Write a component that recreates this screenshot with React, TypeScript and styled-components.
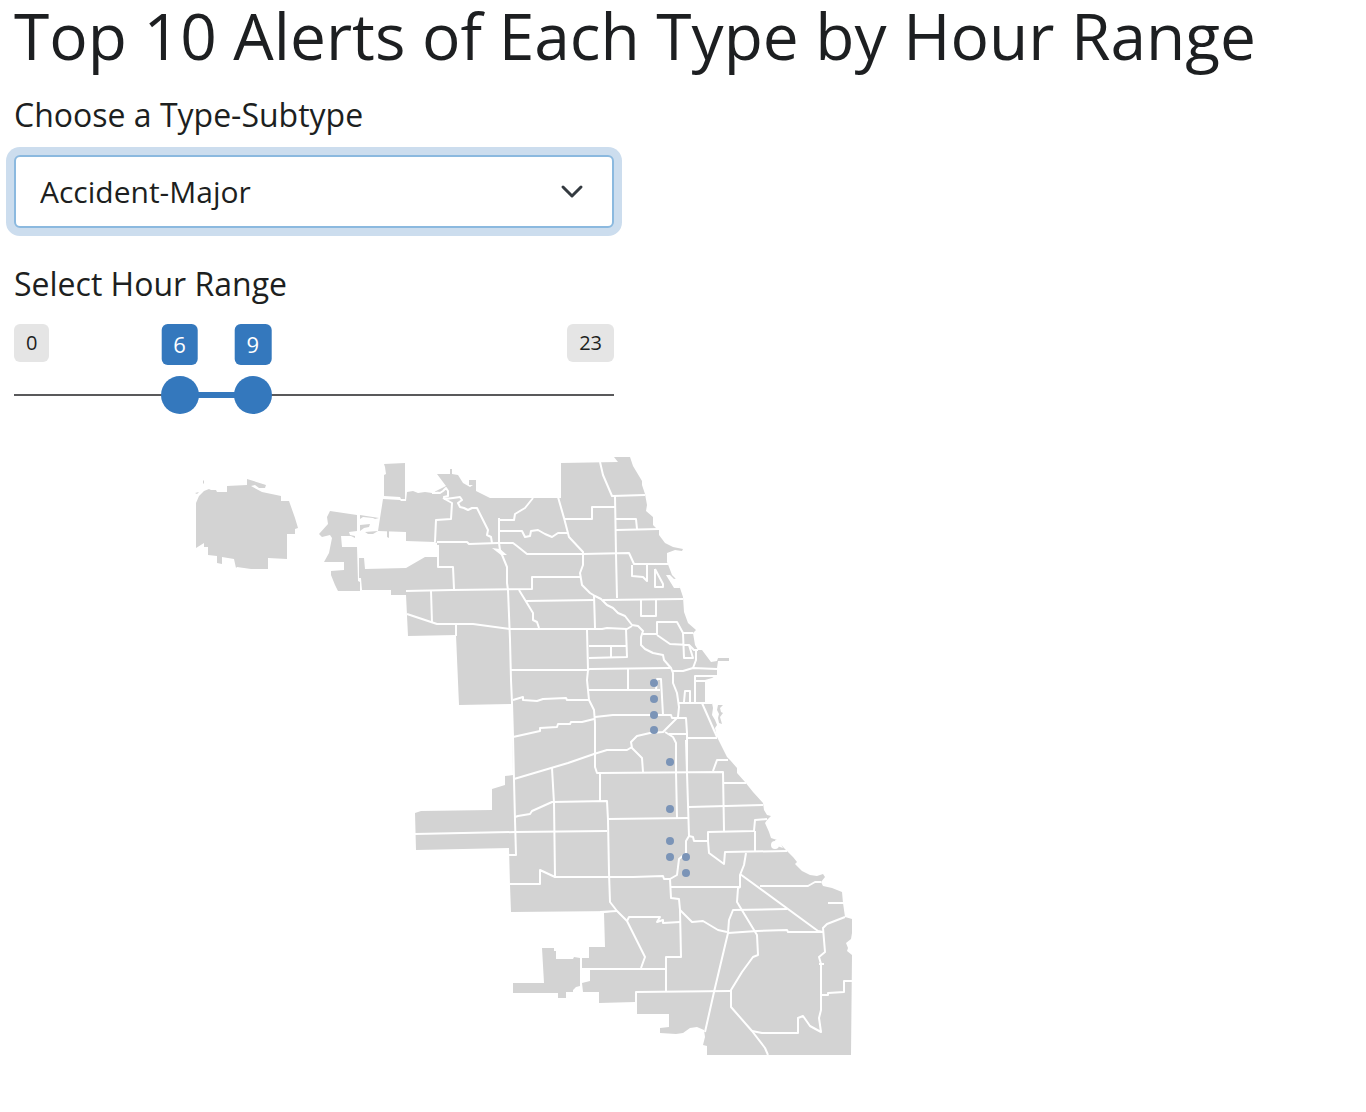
import React, { useState } from "react";
import styled, { createGlobalStyle } from "styled-components";

const GlobalStyle = createGlobalStyle`
  *, *::before, *::after { box-sizing: border-box; }
  body {
    margin: 0;
    background: #ffffff;
    color: #1d1f21;
    font-family: "Open Sans", "Noto Sans", sans-serif;
  }
`;

const Page = styled.main`
  display: flex;
  flex-direction: column;
  padding: 0 14px 32px;
`;

const Title = styled.h1`
  margin: 0 0 19px;
  font-size: 64px;
  font-weight: 400;
  line-height: 72px;
`;

const Controls = styled.div`
  display: flex;
  flex-direction: column;
  gap: 32px;
  width: 100%;
  max-width: 600px;
`;

const Field = styled.div`
  display: flex;
  flex-direction: column;
  gap: 16px;
`;

const FieldSet = styled.fieldset`
  display: flex;
  flex-direction: column;
  min-width: 0;
  margin: 0;
  padding: 0;
  border: 0;
`;

const Label = styled.label`
  font-size: 32px;
  line-height: 48px;
`;

const Legend = styled.legend`
  padding: 0;
  margin-bottom: 16px;
  font-size: 32px;
  line-height: 48px;
`;

const SelectBox = styled.div`
  display: grid;
  align-items: center;

  > * {
    grid-area: 1 / 1;
  }
`;

const Select = styled.select`
  appearance: none;
  width: 100%;
  height: 73px;
  padding: 0 72px 0 24px;
  border: 2px solid #8bb9df;
  border-radius: 6px;
  outline: none;
  background: #ffffff;
  color: inherit;
  font: inherit;
  font-size: 30px;
  box-shadow: 0 0 0 8px #ccddee;
`;

const Chevron = styled.svg`
  justify-self: end;
  margin-right: 26px;
  width: 32px;
  height: 32px;
  pointer-events: none;
`;

const Badges = styled.div`
  position: relative;
  display: flex;
  justify-content: space-between;
  align-items: flex-start;
  height: 52px;
`;

const LimitBadge = styled.span`
  padding: 0 12px;
  border-radius: 6px;
  background: #e5e5e5;
  font-size: 20px;
  line-height: 38px;
`;

const ValueBadge = styled.output`
  position: absolute;
  top: 0;
  transform: translateX(-50%);
  padding: 0 12px;
  border-radius: 6px;
  background: #3478bd;
  color: #ffffff;
  font-size: 22px;
  line-height: 41px;
`;

const Slider = styled.div`
  display: grid;
  align-items: center;
  height: 38px;

  > * {
    grid-area: 1 / 1;
  }
`;

const Rail = styled.div`
  height: 2px;
  background: #59595b;
`;

const RailFill = styled.div`
  height: 6px;
  background: #3478bd;
`;

const Range = styled.input`
  appearance: none;
  width: 100%;
  height: 38px;
  margin: 0;
  background: transparent;
  pointer-events: none;

  &::-webkit-slider-thumb {
    appearance: none;
    width: 38px;
    height: 38px;
    border: 0;
    border-radius: 50%;
    background: #3478bd;
    pointer-events: auto;
  }
`;

const MapFigure = styled.figure`
  max-width: 852px;
  margin: 32px 0 0;
`;

const MapDrawing = styled.svg`
  display: block;
  width: 100%;
  height: auto;
`;

const land = [
  "196,503 199,496 204,491 209,489 211,490 216,490 217,492 227,492 227,486 247,485 247,479 266,485 265,488 259,488 255,485 251,486 262,492 281,496 281,501 289,501 295,518 298,528 295,529 295,534 287,534 287,559 268,558 268,569 251,569 237,567 236,568 234,559 222,557 222,564 217,563 217,556 208,555 208,547 204,547 204,543 196,548",
  "330,511 357,515 357,531 349,532 350,535 355,536 355,538 351,536 341,536 342,547 357,547 358,581 360,582 360,591 338,591 335,585 331,575 331,571 344,570 344,562 324,562 329,553 332,538 330,535 322,537 319,534 328,524 327,517",
  "384,464 405,463 405,499 401,499 400,497 384,496 384,475 386,474 385,467",
  "383,499 400,500 401,501 406,501 407,492 413,491 418,493 425,492 432,493 442,491 434,492 446,486 437,474 450,474 450,469 452,469 452,474 458,475 463,483 470,487 473,485 469,485 469,480 476,480 476,491 490,498 561,498 561,463 618,462 614,457 630,457 633,466 642,481 642,485 645,494 647,505 646,511 653,517 653,525 656,528 659,530 659,535 665,543 673,547 683,549 682,551 675,550 667,553 667,562 669,567 672,575 676,579 680,588 683,597 684,612 688,623 696,630 693,633 695,645 698,650 702,650 711,662 717,661 718,658 729,658 729,661 718,661 717,668 717,675 712,678 705,680 705,702 712,703 713,708 712,715 715,720 717,725 715,728 717,737 727,757 730,760 737,768 737,773 745,782 753,792 763,803 764,810 767,815 771,816 767,820 765,823 769,832 771,838 777,840 784,848 793,857 797,862 795,864 802,871 810,875 817,876 823,874 825,877 821,882 823,886 832,888 842,892 843,903 845,917 852,919 852,933 851,939 846,943 848,948 847,951 852,955 851,1055 707,1055 707,1046 703,1045 705,1037 704,1030 697,1027 690,1028 683,1033 676,1034 660,1033 660,1028 669,1027 669,1014 637,1014 637,992 635,1002 599,1003 599,992 583,992 582,983 590,981 590,970 582,968 582,958 589,958 589,947 605,947 604,913 617,911 511,912 510,885 509,848 416,850 415,813 421,811 492,810 492,789 505,785 505,776 513,775 512,704 459,705 456,635 408,636 406,595 391,595 391,590 362,590 361,578 359,578 359,558 364,558 365,569 406,568 425,557 437,557 437,543 435,542 406,541 406,532 378,531",
  "542,948 554,948 554,951 556,951 556,959 573,959 574,957 580,958 580,986 576,987 573,990 573,992 566,992 566,998 558,998 558,993 513,993 513,983 544,983",
  "360,515 379,518 375,519 373,518 363,517 360,519",
  "360,525 370,524 369,527 364,528 360,531",
  "365,532 378,531 373,534 368,534",
  "387,531 389,531 389,538 387,537",
  "718,705 723,705 720,708 721,712 723,713 720,717 722,724 719,723 718,718 719,714 717,710",
  "203,480 204,481 204,484 203,483",
  "195,493 199,492 197,494",
];

const borders = [
  "432,493 440,493 443,491 446,488 448,491 448,496 444,497 445,499 453,498 460,497 462,500 458,503 460,507 464,508 468,510 472,508 477,508 483,520 488,530 487,535 491,537 492,543",
  "443,498 452,503 451,519 436,520 435,542",
  "437,542 467,542 469,544 498,543 513,543 517,546 527,554 583,554 629,553 634,564 668,564",
  "499,518 499,543 500,550 507,567 507,583 508,590 510,640 511,680 512,703 513,737 514,780 515,820 516,855 509,855",
  "499,520 514,520 515,514 525,508 533,498",
  "499,531 522,531 525,537 530,536 531,531 538,530 545,534 552,537 558,533 568,533",
  "558,497 564,518 569,537 583,552 583,565 580,573 582,585 590,593 595,596 601,599 607,605 613,608 618,613 625,616 632,625 638,626 643,631 641,637 641,645 645,649 653,653 663,655 664,660 671,668 673,673 673,683 677,693 679,707 678,717 667,728 663,732 650,733 637,736 631,742 632,748 642,758 643,772",
  "581,577 532,577 532,589 452,590 406,591",
  "438,545 438,567 453,567 454,589",
  "431,591 432,623",
  "407,614 437,624 473,624 510,629 570,629 602,629 607,628 627,629 632,626",
  "456,625 456,636",
  "519,590 533,613 533,620 537,622 539,628",
  "526,601 594,600",
  "594,595 595,628",
  "600,462 603,475 612,496 645,495",
  "615,496 616,554 617,598",
  "565,519 592,519 592,507 615,507",
  "616,519 636,519 637,529",
  "616,530 659,529",
  "632,565 632,576 643,577 647,581 647,565",
  "655,569 663,584 663,587 655,587 655,569",
  "603,600 683,599",
  "641,600 641,616 656,616 656,600",
  "643,634 657,634 657,622 677,622 683,633 693,633",
  "683,633 684,658 693,658 689,645 670,644 657,635",
  "689,645 694,650 698,650",
  "696,650 696,660 693,668",
  "673,671 683,671 693,668 717,669",
  "695,703 695,676 718,676",
  "695,681 705,681",
  "684,702 685,691 690,691 690,702",
  "679,703 712,703",
  "702,703 717,737",
  "687,738 717,738",
  "587,630 588,670 587,680 589,700 594,710 595,723 595,767 597,773 600,773 600,802",
  "589,646 626,646",
  "626,629 627,657 589,658",
  "611,647 611,657",
  "511,670 587,670 590,669 670,668",
  "628,669 628,689",
  "589,690 660,690",
  "656,690 657,679 661,679 663,715",
  "595,717 613,715 671,715 672,718 686,718 687,733 687,770",
  "665,732 673,737 676,743 676,772 677,818",
  "669,734 687,734",
  "513,700 523,697 523,700 537,701 543,699 566,698 567,700 589,700",
  "513,737 540,731 540,728 557,727 558,724 570,724 571,722 582,722 594,719",
  "514,779 568,763 594,754 607,750 627,750 632,747",
  "552,768 554,803 555,877",
  "515,817 518,816 530,814 532,811 552,802 607,801 608,820 609,873 610,902 617,911 627,921 645,957 641,968",
  "415,834 515,832 607,831",
  "510,884 540,884 540,870 555,877 633,877 663,876 664,879 670,879",
  "600,773 723,772 724,831",
  "713,771 717,760 728,760",
  "723,783 746,783",
  "689,807 763,805",
  "686,740 687,773 689,836 693,837 694,841 708,841 708,832 754,831 755,820 767,819",
  "755,831 755,851",
  "708,841 709,853 724,864 725,852 787,851",
  "608,819 688,818",
  "689,836 686,841 686,853 679,859 677,875 670,879 671,898 679,899 680,910 681,957 666,957 666,991",
  "680,910 692,922 703,921 713,927 718,930 727,932",
  "728,933 757,931 787,930 788,932 823,932",
  "671,887 740,887",
  "746,853 744,865 740,875 740,887 738,888 737,902 757,935 758,955 753,957 742,972 731,990 731,1007 752,1031 765,1048 768,1055",
  "752,1031 762,1033 798,1033 798,1018 803,1016 810,1026 821,1032 819,1018 821,1010 821,964 819,957 825,952 823,928 827,924 845,917",
  "740,874 818,931 823,932",
  "760,886 808,886 815,882 821,882",
  "787,909 733,910 729,920 728,933 714,992 705,1032",
  "821,995 828,995 828,993 844,992 844,981 852,981",
  "582,969 665,969",
  "636,1002 636,992 730,991",
  "627,921 629,917 660,917 657,922 663,920 663,923 680,922",
  "828,903 844,903",
  "617,911 600,912",
  "819,964 824,964",
];

const water = [
  "666,575 670,575 674,579 678,578 680,588 674,588",
  "492,548 500,549 507,555 501,555",
  "775,840 779,840 783,848 777,846",
];

const alerts = [
  [654, 683], [654, 699], [654, 715], [654, 730], [670, 762],
  [670, 809], [670, 841], [670, 857], [686, 857], [686, 873],
];

const MIN_HOUR = 0;
const MAX_HOUR = 23;
const THUMB = 38;

const thumbCenter = (hour: number) => {
  const share = (hour - MIN_HOUR) / (MAX_HOUR - MIN_HOUR);
  return `calc(${THUMB / 2}px + (100% - ${THUMB}px) * ${share})`;
};

function TypePicker() {
  const [kind, setKind] = useState("Accident-Major");
  return (
    <Field>
      <Label htmlFor="alert-type">Choose a Type-Subtype</Label>
      <SelectBox>
        <Select id="alert-type" value={kind} onChange={(e) => setKind(e.target.value)}>
          <option>Accident-Major</option>
        </Select>
        <Chevron viewBox="0 0 32 32" aria-hidden="true">
          <path d="M7 11 L16 20 L25 11" fill="none" stroke="#343a40" strokeWidth="3" strokeLinecap="round" strokeLinejoin="round" />
        </Chevron>
      </SelectBox>
    </Field>
  );
}

function HourPicker() {
  const [from, setFrom] = useState(6);
  const [to, setTo] = useState(9);
  return (
    <FieldSet>
      <Legend>Select Hour Range</Legend>
      <Badges>
        <LimitBadge>{MIN_HOUR}</LimitBadge>
        <LimitBadge>{MAX_HOUR}</LimitBadge>
        <ValueBadge htmlFor="hour-from" style={{ left: thumbCenter(from) }}>{from}</ValueBadge>
        <ValueBadge htmlFor="hour-to" style={{ left: thumbCenter(to) }}>{to}</ValueBadge>
      </Badges>
      <Slider>
        <Rail />
        <RailFill
          style={{
            marginLeft: thumbCenter(from),
            marginRight: thumbCenter(MAX_HOUR - to),
          }}
        />
        <Range
          id="hour-from"
          type="range"
          aria-label="From hour"
          min={MIN_HOUR}
          max={MAX_HOUR}
          value={from}
          onChange={(e) => setFrom(Math.min(Number(e.target.value), to))}
        />
        <Range
          id="hour-to"
          type="range"
          aria-label="To hour"
          min={MIN_HOUR}
          max={MAX_HOUR}
          value={to}
          onChange={(e) => setTo(Math.max(Number(e.target.value), from))}
        />
      </Slider>
    </FieldSet>
  );
}

function AlertMap() {
  return (
    <MapFigure>
      <MapDrawing viewBox="14 446 852 622" role="img" aria-label="Chicago community areas with alert locations">
        <g fill="#d3d3d3">
          {land.map((points) => <polygon key={points} points={points} />)}
        </g>
        <g fill="#ffffff">
          {water.map((points) => <polygon key={points} points={points} />)}
          <circle cx="775" cy="845" r="4" />
        </g>
        <g fill="none" stroke="#ffffff" strokeWidth="2" strokeLinejoin="round">
          {borders.map((points) => <polyline key={points} points={points} />)}
        </g>
        <g fill="#7b94b7">
          {alerts.map(([x, y]) => <circle key={`${x}-${y}`} cx={x} cy={y} r="4" />)}
        </g>
      </MapDrawing>
    </MapFigure>
  );
}

export default function App() {
  return (
    <>
      <GlobalStyle />
      <Page>
        <Title>Top 10 Alerts of Each Type by Hour Range</Title>
        <Controls>
          <TypePicker />
          <HourPicker />
        </Controls>
        <AlertMap />
      </Page>
    </>
  );
}
